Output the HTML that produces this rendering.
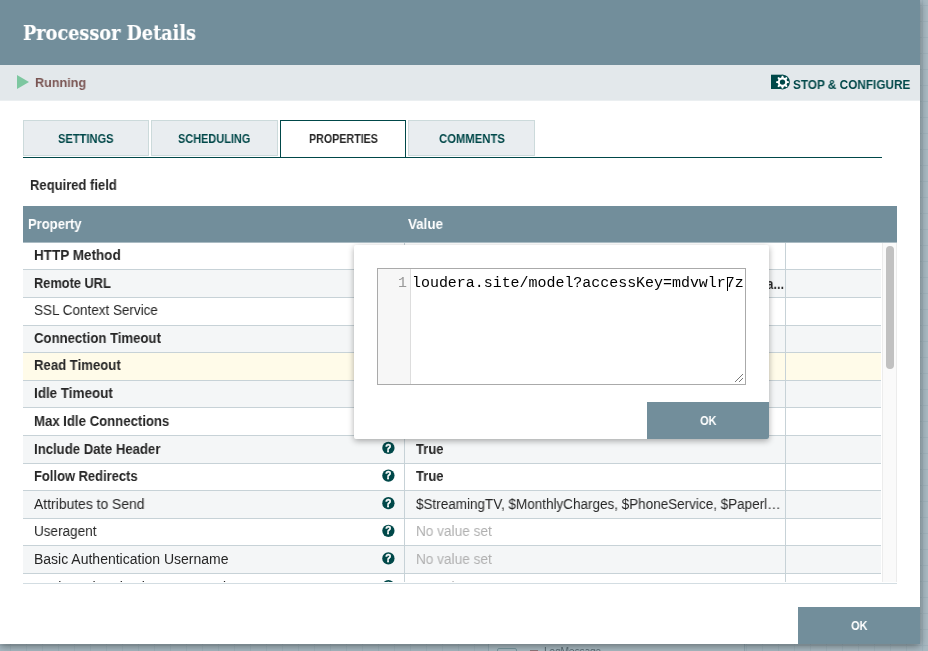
<!DOCTYPE html>
<html lang="en">
<head>
<meta charset="utf-8">
<title>Processor Details</title>
<style>
*{box-sizing:border-box;margin:0;padding:0}
html,body{width:928px;height:651px;overflow:hidden}
body{position:relative;font-family:"Liberation Sans",sans-serif;background:#a8b9c1;color:#262626}
.t{display:inline-block;transform-origin:0 50%;white-space:nowrap;will-change:transform}
.canvas{position:absolute;left:0;top:0;width:928px;height:651px;background-color:#f9fafb;
background-image:linear-gradient(to right,#e4e9ec 1px,transparent 1px),linear-gradient(to bottom,#e4e9ec 1px,transparent 1px);
background-size:16px 16px;background-position:10px 5px}
.glass{position:absolute;left:0;top:0;width:928px;height:651px;background:rgba(114,142,155,.6)}
.proc{position:absolute;left:488px;top:636px;width:257px;height:40px;background:#fff;border:1px solid #c7d2d7}
.proc .ic{position:absolute;left:8px;top:11px;width:20px;height:20px;border:1px solid #8aa;border-radius:2px}
.proc .rd{position:absolute;left:41px;top:13px;width:8px;height:2px;background:#ba554a}
.proc>span{will-change:transform;position:absolute;left:55px;top:8px;font-size:11px;line-height:13px;color:#262626}
.dialog{position:absolute;left:0;top:0;width:920px;height:644px;background:#fff;box-shadow:0 2px 8px rgba(0,0,0,.42)}
.hdr{position:absolute;left:0;top:0;width:920px;height:65px;background:#728e9b}
.hdr h1{position:absolute;left:22.5px;top:19.5px;font-family:"DejaVu Serif","Liberation Serif",serif;font-weight:700;font-size:19.75px;line-height:26px;color:#fff;white-space:nowrap;-webkit-text-stroke:0.15px #fff}
.status{position:absolute;left:0;top:65px;width:920px;height:36px;background:#e3e8eb;border-bottom:1px solid #ebeff1}
.tri{position:absolute;left:17px;top:10px;width:0;height:0;border-left:12.5px solid #7dc7a0;border-top:7px solid transparent;border-bottom:7px solid transparent}
.run{position:absolute;left:35px;top:9px;font-size:13.5px;line-height:18px;font-weight:700;color:#7a5553;white-space:nowrap}
.stop{position:absolute;left:793px;top:12px;font-size:12px;line-height:16px;font-weight:700;color:#004849;white-space:nowrap}
.sicon{position:absolute;left:770px;top:8px}
.tab{position:absolute;top:120px;height:36px;width:126px;background:#e9edf0;border:1px solid #ccdadb;font-size:12px;line-height:36px;font-weight:700;color:#004849;white-space:nowrap}
.tab .t{position:absolute;top:0}
.tab.on{height:37px;background:#fff;border:1px solid #004849;border-bottom:none;color:#262626}
.tabline{position:absolute;left:23px;top:157px;width:859px;height:1px;background:#004849}
.req{position:absolute;left:30px;top:176px;font-size:14px;line-height:18px;font-weight:700;color:#262626;white-space:nowrap}
.thead{position:absolute;z-index:2;left:23px;top:206px;width:874px;height:37px;border-bottom:1px solid #aabbc3;background:#728e9b;color:#fff;font-size:14px;font-weight:700;line-height:36px}
.thead span.h{position:absolute;top:0}
.tbody{position:absolute;left:23px;top:242px;width:874px;height:340px;overflow:hidden}
.tline{position:absolute;left:23px;top:583px;width:874px;height:1px;background:#d3dde2}
.row{position:absolute;left:0;width:858px;border-bottom:1px solid #c7d2d7;background:#fff;font-size:14px}
.row.odd{background:#f4f6f7}
.row.sel{background:#fffbe9}
.row>span{position:absolute;white-space:nowrap}
.pn{left:11.3px}
.b{font-weight:700}
.q{left:359px;line-height:0 !important}
.c1,.c2{position:absolute;top:0;bottom:-1px;width:1px;background:#c7d2d7}
.c1{left:381px}.c2{left:762px}
.pv{left:392.8px}
.pv.g{color:#b0b0b0}
.sbar{position:absolute;left:859px;top:0;width:15px;height:340px;background:#fafafa;border-left:1px solid #ececec;border-right:1px solid #ececec}
.sbar i{position:absolute;left:3px;top:4px;width:8px;height:123px;border-radius:4px;background:#c1c1c1}
.okb{position:absolute;left:798px;top:607px;width:122px;height:37px;background:#728e9b;color:#fff;font-size:13px;font-weight:700;line-height:37px}
.okb .t,.pok .t{position:absolute;left:52.7px;top:0}
.pop{position:absolute;left:354px;top:245px;width:415px;height:194px;background:#fff;border-radius:2px;overflow:hidden;box-shadow:0 2px 6px rgba(0,0,0,.33)}
.cm{position:absolute;left:23px;top:23px;width:369px;height:117px;border:1px solid #aaa;background:#fff}
.gut{position:absolute;left:0;top:0;width:33px;height:115px;background:#f7f7f7;border-right:1px solid #ddd}
.ln{will-change:transform;position:absolute;left:0;top:5px;width:29px;text-align:right;font-family:"Liberation Mono",monospace;font-size:14.95px;line-height:18px;color:#999}
.code{will-change:transform;position:absolute;left:34px;top:5px;font-family:"Liberation Mono",monospace;font-size:14.95px;line-height:18px;color:#000;white-space:pre}
.caret{position:absolute;left:348.5px;top:8px;width:1px;height:14px;background:#000}
.grip{position:absolute;right:1px;bottom:1px}
.pok{position:absolute;left:293px;top:157px;width:122px;height:37px;background:#728e9b;color:#fff;font-size:13px;font-weight:700;line-height:37px}
.trunc{position:absolute;left:767.4px;top:275px;font-size:14px;font-weight:700;line-height:18px;color:#262626}
</style>
</head>
<body>
<div class="canvas"></div>
<div class="proc"><div class="ic"></div><div class="rd"></div><span><span class="t" style="transform:scaleX(0.9065)">LogMessage</span></span></div>
<div class="glass"></div>
<div class="dialog">
  <div class="hdr"><h1><span class="t" style="transform:scaleX(0.8943)">Processor Details</span></h1></div>
  <div class="status">
    <div class="tri"></div>
    <div class="run"><span class="t" style="transform:scaleX(0.9336)">Running</span></div>
    <svg class="sicon" width="22" height="18" viewBox="0 0 22 18"><path d="M1 1.7h12.5v14.3H1z" fill="#004849"/><circle cx="12.5" cy="9.1" r="7.4" fill="#004849"/><path d="M11.28 4.56L11.82 2.64L13.18 2.64L13.72 4.56L14.85 5.03L16.59 4.05L17.55 5.01L16.57 6.75L17.04 7.88L18.96 8.42L18.96 9.78L17.04 10.32L16.57 11.45L17.55 13.19L16.59 14.15L14.85 13.17L13.72 13.64L13.18 15.56L11.82 15.56L11.28 13.64L10.15 13.17L8.41 14.15L7.45 13.19L8.43 11.45L7.96 10.32L6.04 9.78L6.04 8.42L7.96 7.88L8.43 6.75L7.45 5.01L8.41 4.05L10.15 5.03Z" fill="#fff"/><circle cx="12.5" cy="9.1" r="2.7" fill="#004849"/></svg>
    <div class="stop"><span class="t" style="transform:scaleX(0.9810)">STOP &amp; CONFIGURE</span></div>
  </div>
  <div class="tab" style="left:23px"><span class="t" style="left:34.1px;transform:scaleX(0.9249)">SETTINGS</span></div>
  <div class="tab" style="left:151px;width:127px"><span class="t" style="left:26px;transform:scaleX(0.9113)">SCHEDULING</span></div>
  <div class="tab on" style="left:280px"><span class="t" style="left:27.5px;transform:scaleX(0.8908)">PROPERTIES</span></div>
  <div class="tab" style="left:408px;width:127px"><span class="t" style="left:29.5px;transform:scaleX(0.9400)">COMMENTS</span></div>
  <div class="tabline"></div>
  <div class="req"><span class="t" style="transform:scaleX(0.9299)">Required field</span></div>
  <div class="thead"><span class="h" style="left:4.5px"><span class="t" style="transform:scaleX(0.9310)">Property</span></span><span class="h" style="left:385px"><span class="t" style="transform:scaleX(0.9568)">Value</span></span></div>
  <div class="tbody">
<div class="row" style="top:0px;height:28px;line-height:16px"><span class="pn b" style="top:5px"><span class="t" style="transform:scaleX(0.9638)">HTTP Method</span></span><span class="q" style="top:5px"><svg width="13" height="15" viewBox="0 0 13 15"><circle cx="6.4" cy="7.42" r="6.15" fill="#004849"/><text x="6.4" y="11.02" text-anchor="middle" font-family="Liberation Sans, sans-serif" font-weight="700" font-size="10" fill="#fff" stroke="#fff" stroke-width="0.4">?</text></svg></span><i class="c1"></i><i class="c2"></i></div>
<div class="row odd" style="top:28px;height:28px;line-height:16px"><span class="pn b" style="top:5px"><span class="t" style="transform:scaleX(0.9142)">Remote URL</span></span><span class="q" style="top:5px"><svg width="13" height="15" viewBox="0 0 13 15"><circle cx="6.4" cy="7.06" r="6.15" fill="#004849"/><text x="6.4" y="10.66" text-anchor="middle" font-family="Liberation Sans, sans-serif" font-weight="700" font-size="10" fill="#fff" stroke="#fff" stroke-width="0.4">?</text></svg></span><i class="c1"></i><i class="c2"></i></div>
<div class="row" style="top:56px;height:28px;line-height:16px"><span class="pn" style="top:4px"><span class="t" style="transform:scaleX(0.9631)">SSL Context Service</span></span><span class="q" style="top:4px"><svg width="13" height="15" viewBox="0 0 13 15"><circle cx="6.4" cy="7.70" r="6.15" fill="#004849"/><text x="6.4" y="11.30" text-anchor="middle" font-family="Liberation Sans, sans-serif" font-weight="700" font-size="10" fill="#fff" stroke="#fff" stroke-width="0.4">?</text></svg></span><i class="c1"></i><i class="c2"></i></div>
<div class="row odd" style="top:84px;height:27px;line-height:16px"><span class="pn b" style="top:4px"><span class="t" style="transform:scaleX(0.9395)">Connection Timeout</span></span><span class="q" style="top:4px"><svg width="13" height="15" viewBox="0 0 13 15"><circle cx="6.4" cy="7.34" r="6.15" fill="#004849"/><text x="6.4" y="10.94" text-anchor="middle" font-family="Liberation Sans, sans-serif" font-weight="700" font-size="10" fill="#fff" stroke="#fff" stroke-width="0.4">?</text></svg></span><i class="c1"></i><i class="c2"></i></div>
<div class="row sel" style="top:111px;height:28px;line-height:16px"><span class="pn b" style="top:4px"><span class="t" style="transform:scaleX(0.9392)">Read Timeout</span></span><span class="q" style="top:5px"><svg width="13" height="15" viewBox="0 0 13 15"><circle cx="6.4" cy="6.98" r="6.15" fill="#004849"/><text x="6.4" y="10.58" text-anchor="middle" font-family="Liberation Sans, sans-serif" font-weight="700" font-size="10" fill="#fff" stroke="#fff" stroke-width="0.4">?</text></svg></span><i class="c1"></i><i class="c2"></i></div>
<div class="row odd" style="top:139px;height:27px;line-height:16px"><span class="pn b" style="top:4px"><span class="t" style="transform:scaleX(0.9587)">Idle Timeout</span></span><span class="q" style="top:4px"><svg width="13" height="15" viewBox="0 0 13 15"><circle cx="6.4" cy="7.62" r="6.15" fill="#004849"/><text x="6.4" y="11.22" text-anchor="middle" font-family="Liberation Sans, sans-serif" font-weight="700" font-size="10" fill="#fff" stroke="#fff" stroke-width="0.4">?</text></svg></span><i class="c1"></i><i class="c2"></i></div>
<div class="row" style="top:166px;height:28px;line-height:16px"><span class="pn b" style="top:5px"><span class="t" style="transform:scaleX(0.9402)">Max Idle Connections</span></span><span class="q" style="top:5px"><svg width="13" height="15" viewBox="0 0 13 15"><circle cx="6.4" cy="7.26" r="6.15" fill="#004849"/><text x="6.4" y="10.86" text-anchor="middle" font-family="Liberation Sans, sans-serif" font-weight="700" font-size="10" fill="#fff" stroke="#fff" stroke-width="0.4">?</text></svg></span><i class="c1"></i><i class="c2"></i></div>
<div class="row odd" style="top:194px;height:28px;line-height:16px"><span class="pn b" style="top:5px"><span class="t" style="transform:scaleX(0.9391)">Include Date Header</span></span><span class="q" style="top:5px"><svg width="13" height="15" viewBox="0 0 13 15"><circle cx="6.4" cy="6.90" r="6.15" fill="#004849"/><text x="6.4" y="10.50" text-anchor="middle" font-family="Liberation Sans, sans-serif" font-weight="700" font-size="10" fill="#fff" stroke="#fff" stroke-width="0.4">?</text></svg></span><i class="c1"></i><span class="pv b" style="top:5px"><span class="t" style="transform:scaleX(0.9301)">True</span></span><i class="c2"></i></div>
<div class="row" style="top:222px;height:27px;line-height:16px"><span class="pn b" style="top:4px"><span class="t" style="transform:scaleX(0.9248)">Follow Redirects</span></span><span class="q" style="top:4px"><svg width="13" height="15" viewBox="0 0 13 15"><circle cx="6.4" cy="7.54" r="6.15" fill="#004849"/><text x="6.4" y="11.14" text-anchor="middle" font-family="Liberation Sans, sans-serif" font-weight="700" font-size="10" fill="#fff" stroke="#fff" stroke-width="0.4">?</text></svg></span><i class="c1"></i><span class="pv b" style="top:4px"><span class="t" style="transform:scaleX(0.9301)">True</span></span><i class="c2"></i></div>
<div class="row odd" style="top:249px;height:28px;line-height:16px"><span class="pn" style="top:5px"><span class="t" style="transform:scaleX(0.9929)">Attributes to Send</span></span><span class="q" style="top:5px"><svg width="13" height="15" viewBox="0 0 13 15"><circle cx="6.4" cy="7.18" r="6.15" fill="#004849"/><text x="6.4" y="10.78" text-anchor="middle" font-family="Liberation Sans, sans-serif" font-weight="700" font-size="10" fill="#fff" stroke="#fff" stroke-width="0.4">?</text></svg></span><i class="c1"></i><span class="pv n" style="top:5px"><span class="t" style="transform:scaleX(0.9634)">$StreamingTV, $MonthlyCharges, $PhoneService, $Paperl…</span></span><i class="c2"></i></div>
<div class="row" style="top:277px;height:27px;line-height:16px"><span class="pn" style="top:4px"><span class="t" style="transform:scaleX(0.9660)">Useragent</span></span><span class="q" style="top:4px"><svg width="13" height="15" viewBox="0 0 13 15"><circle cx="6.4" cy="7.82" r="6.15" fill="#004849"/><text x="6.4" y="11.42" text-anchor="middle" font-family="Liberation Sans, sans-serif" font-weight="700" font-size="10" fill="#fff" stroke="#fff" stroke-width="0.4">?</text></svg></span><i class="c1"></i><span class="pv g" style="top:4px"><span class="t" style="transform:scaleX(0.9728)">No value set</span></span><i class="c2"></i></div>
<div class="row odd" style="top:304px;height:28px;line-height:16px"><span class="pn" style="top:5px"><span class="t" style="transform:scaleX(0.9997)">Basic Authentication Username</span></span><span class="q" style="top:5px"><svg width="13" height="15" viewBox="0 0 13 15"><circle cx="6.4" cy="7.46" r="6.15" fill="#004849"/><text x="6.4" y="11.06" text-anchor="middle" font-family="Liberation Sans, sans-serif" font-weight="700" font-size="10" fill="#fff" stroke="#fff" stroke-width="0.4">?</text></svg></span><i class="c1"></i><span class="pv g" style="top:5px"><span class="t" style="transform:scaleX(0.9728)">No value set</span></span><i class="c2"></i></div>
<div class="row" style="top:332px;height:28px;line-height:16px"><span class="pn" style="top:5px"><span class="t" style="transform:scaleX(1.0029)">Basic Authentication Password</span></span><span class="q" style="top:5px"><svg width="13" height="15" viewBox="0 0 13 15"><circle cx="6.4" cy="7.10" r="6.15" fill="#004849"/><text x="6.4" y="10.70" text-anchor="middle" font-family="Liberation Sans, sans-serif" font-weight="700" font-size="10" fill="#fff" stroke="#fff" stroke-width="0.4">?</text></svg></span><i class="c1"></i><span class="pv g" style="top:5px"><span class="t" style="transform:scaleX(0.9728)">No value set</span></span><i class="c2"></i></div>
    <div class="sbar"><i></i></div>
  </div>
  <div class="tline"></div>
  <div class="trunc"><span class="t" style="transform:scaleX(0.7987)">a…</span></div>
  <div class="pop">
    <div class="cm">
      <div class="gut"><div class="ln">1</div></div>
      <div class="code">loudera.site/model?accessKey=mdvwlr7z</div>
      <div class="caret"></div>
      <svg class="grip" width="10" height="10" viewBox="0 0 10 10"><path d="M9 1L1 9M9 5L5 9" stroke="#777" stroke-width="1" fill="none"/></svg>
    </div>
    <div class="pok"><span class="t" style="transform:scaleX(0.8513)">OK</span></div>
  </div>
  <div class="okb"><span class="t" style="transform:scaleX(0.8513)">OK</span></div>
</div>
</body>
</html>
